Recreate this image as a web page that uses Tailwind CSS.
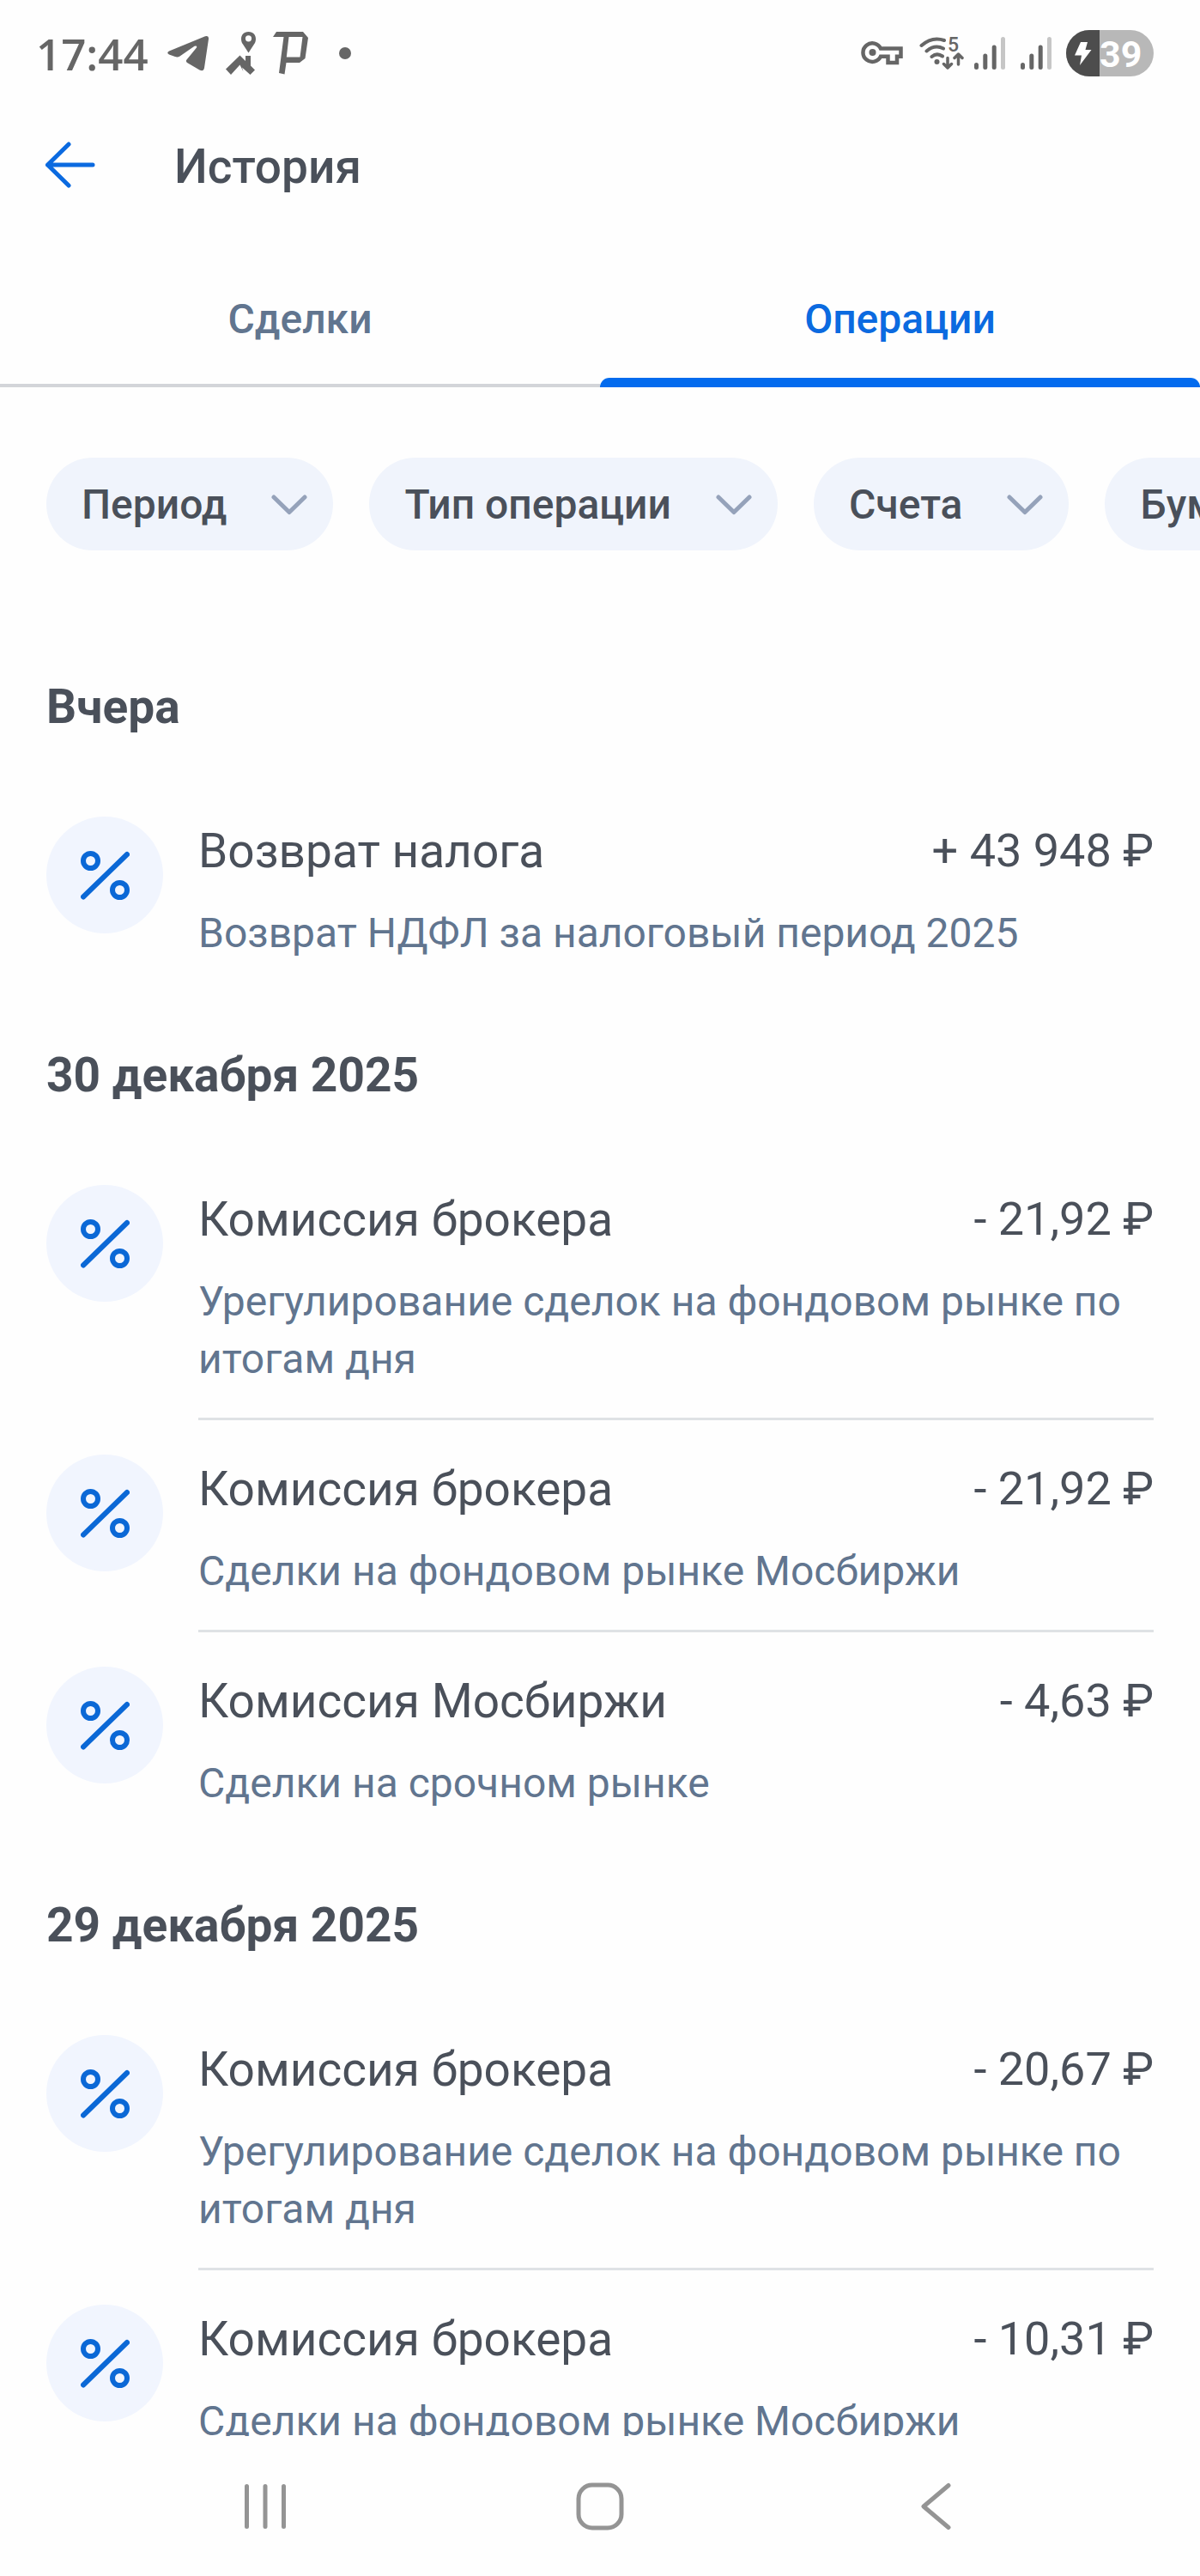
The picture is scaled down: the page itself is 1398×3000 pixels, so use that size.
<!DOCTYPE html>
<html lang="ru">
  <head>
    <meta charset="utf-8" />
    <meta name="viewport" content="width=device-width, initial-scale=1" />
    <title>История</title>
    <script src="https://cdn.jsdelivr.net/npm/@tailwindcss/browser@4"></script>
  </head>
  <body class="bg-[#fefefe]">
    <!-- Shared icons -->
    <svg class="hidden" xmlns="http://www.w3.org/2000/svg">
      <symbol id="icon-percent" viewBox="0 0 57 57">
        <g fill="none" stroke="currentColor" stroke-width="6" stroke-linecap="round">
          <circle cx="11.5" cy="11.5" r="8.5"></circle>
          <circle cx="45.5" cy="45.5" r="8.5"></circle>
          <path d="M3 53.5L54 4"></path>
        </g>
      </symbol>
      <symbol id="icon-chevron" viewBox="0 0 42 24">
        <path d="M3 3L21 20.5L39 3" fill="none" stroke="currentColor" stroke-width="5" stroke-linecap="round" stroke-linejoin="round"></path>
      </symbol>
      <symbol id="icon-signal" viewBox="0 0 36 40">
        <g fill="none" stroke-width="5" stroke-linecap="round">
          <path d="M2.5 33.5V36.5M12.8 23V36.5M23.2 13V36.5" stroke="#666666"></path>
          <path d="M33.5 3.5V36.5" stroke="#c6c6c6"></path>
        </g>
      </symbol>
    </svg>

    <div class="flex h-screen min-w-0 flex-col overflow-hidden text-[#4a505a]" style='font-family: Roboto, "Noto Sans", sans-serif;'>
      <!-- Status bar -->
      <div class="flex h-[124px] shrink-0 items-center justify-between pr-[54px] pl-[42px] text-[#666666]">
        <div class="flex items-center">
          <span class="text-[51px] leading-[60px] font-semibold" style='font-family: "Open Sans", sans-serif;'>17:44</span>
          <svg class="ml-[22px] h-[42px] w-12" viewBox="0 0 48 42" fill="currentColor">
            <path d="M2 18.500L44 1.200Q48.500 0 48 4.500L43 38Q42 43 37.500 40.500L23 32Q21 30.500 22.500 28.500L34 14.500Q35 11.500 31.500 12.800L14.500 24.500Q12 26 9 25L2 22.500Q-1.500 20.500 2 18.500Z"></path>
          </svg>
          <svg class="ml-5 h-[50px] w-[35px]" viewBox="0 0 35 50" fill="currentColor">
            <path fill-rule="evenodd" d="M26.5 0C18 0 16 9 20 14.500L26.500 24.500L33 14.500C37 9 35 0 26.500 0ZM26.500 4.200A3.600 3.600 0 1 1 26.500 11.400A3.600 3.600 0 1 1 26.500 4.200Z"></path>
            <path d="M0 43.500L16.500 27.500L23 34V28H29V39.500L34 44.500L28.500 50L19 41.500L20.500 46.500L16.500 38.500L6 50Z"></path>
          </svg>
          <svg class="ml-5 h-[50px] w-[42px]" viewBox="0 0 42 50" fill="currentColor">
            <path fill-rule="evenodd" d="M4 0H35L41 7L37.500 31L31 36H15.500L13.500 49.500L7 48L12.500 6H0ZM18.500 6L15.800 29.500H31.500L34.500 6Z"></path>
          </svg>
          <span class="ml-[35px] size-3.5 rounded-full bg-[#666666]"></span>
        </div>
        <div class="flex items-center">
          <svg class="h-[30px] w-[50px]" viewBox="0 0 50 30" fill="none" stroke="currentColor" stroke-width="4.5">
            <path d="M23 9.500H46.500V18.800H42V26H31.500V18.800H23A10.800 10.800 0 1 1 23 9.500Z"></path>
            <circle cx="13.500" cy="14" r="4" fill="currentColor" stroke="none"></circle>
          </svg>
          <svg class="ml-[18px] h-[40px] w-[52px]" viewBox="0 0 52 40" fill="none" stroke="currentColor" stroke-width="4" stroke-linecap="round">
            <path d="M2.500 11Q15 0 29 5M8.500 17.500Q18 9.500 28 14.500M14.500 24Q20.500 19 27 23.500"></path>
            <circle cx="20.500" cy="30" r="3" fill="currentColor" stroke="none"></circle>
            <path d="M33 25.500V36M28.500 32.500L33 37L37.500 32.500M45.500 33V21.500M41 25.500L45.500 21L50 25.500" stroke-width="3.500" stroke-linejoin="round"></path>
            <text x="33" y="18" font-size="23" font-weight="500" fill="currentColor" stroke="none">5</text>
          </svg>
          <svg class="ml-3 h-10 w-9"><use href="#icon-signal"></use></svg>
          <svg class="ml-[18px] h-10 w-9"><use href="#icon-signal"></use></svg>
          <div class="ml-[17px] flex h-[54px] w-[102px] overflow-hidden rounded-full bg-[#b8b8b8]">
            <div class="flex w-[39px] items-center justify-center bg-[#4d4d4d]">
              <svg class="h-7 w-5" viewBox="0 0 20 28" fill="#ffffff">
                <path d="M7 1L15 1L12.500 10H19.500L6 28L8 16.500H0Z"></path>
              </svg>
            </div>
            <span class="text-[43px] leading-[56px] font-bold text-white">39</span>
          </div>
        </div>
      </div>

      <!-- Title -->
      <header class="flex h-[136px] shrink-0 items-center gap-[92px] pl-[52px]">
        <button type="button" aria-label="Назад" class="text-[#0b6ae0]">
          <svg class="h-[54px] w-[59px]" viewBox="0 0 59 54" fill="none" stroke="currentColor" stroke-width="5" stroke-linecap="round" stroke-linejoin="round">
            <path d="M56 27H3.500M28 3L3.500 27L28 51"></path>
          </svg>
        </button>
        <h1 class="pt-1 text-[55px] leading-[72px] font-medium">История</h1>
      </header>

      <!-- Tabs -->
      <div role="tablist" class="grid shrink-0 grid-cols-2 text-[48px] leading-[64px] font-medium">
        <button type="button" role="tab" aria-selected="false" class="border-b-4 border-[#d3d5d9] pt-20 pb-[43px] text-[#61758f]">Сделки</button>
        <button type="button" role="tab" aria-selected="true" class="relative pt-20 pb-[47px] text-[#0b6ae0]">
          Операции
          <span class="absolute inset-x-0 bottom-0 h-[11px] rounded-t-[11px] bg-[#036bee]"></span>
        </button>
      </div>

      <!-- Filters -->
      <div class="mt-[82px] flex shrink-0 gap-[42px] overflow-hidden pl-[54px] text-[48px] leading-[64px] font-medium whitespace-nowrap">
        <button type="button" class="flex h-[108px] shrink-0 items-center gap-[52px] rounded-full bg-[#f0f4fc] pt-0.5 pr-[30px] pl-[41px]">
          Период
          <svg class="h-6 w-[42px] text-[#95a2ba]"><use href="#icon-chevron"></use></svg>
        </button>
        <button type="button" class="flex h-[108px] shrink-0 items-center gap-[52px] rounded-full bg-[#f0f4fc] pt-0.5 pr-[30px] pl-[41px]">
          Тип операции
          <svg class="h-6 w-[42px] text-[#95a2ba]"><use href="#icon-chevron"></use></svg>
        </button>
        <button type="button" class="flex h-[108px] shrink-0 items-center gap-[52px] rounded-full bg-[#f0f4fc] pt-0.5 pr-[30px] pl-[41px]">
          Счета
          <svg class="h-6 w-[42px] text-[#95a2ba]"><use href="#icon-chevron"></use></svg>
        </button>
        <button type="button" class="flex h-[108px] shrink-0 items-center gap-[52px] rounded-full bg-[#f0f4fc] pt-0.5 pr-[30px] pl-[41px]">
          Бумаги
          <svg class="h-6 w-[42px] text-[#95a2ba]"><use href="#icon-chevron"></use></svg>
        </button>
      </div>

      <!-- Operations -->
      <main class="mt-[142px] flex min-h-0 flex-1 flex-col gap-[57px] overflow-hidden px-[54px]">
        <section class="shrink-0">
          <h2 class="mb-12 text-[55px] leading-[80px] font-bold">Вчера</h2>
          <ul>
            <li class="flex gap-[41px] pt-10">
              <span class="flex size-[136px] shrink-0 items-center justify-center rounded-full bg-[#f1f5fe] text-[#0b68d6]">
                <svg class="size-[57px]"><use href="#icon-percent"></use></svg>
              </span>
              <div class="min-w-0 flex-1 pb-[35px]">
                <div class="flex justify-between leading-[80px]">
                  <h3 class="text-[55px]">Возврат налога</h3>
                  <span class="text-[54px] whitespace-nowrap">+ 43 948 ₽</span>
                </div>
                <p class="mt-[22px] text-[48px] leading-[67px] text-[#61758f]">Возврат НДФЛ за налоговый период 2025</p>
              </div>
            </li>
          </ul>
        </section>

        <section class="shrink-0">
          <h2 class="mb-12 text-[55px] leading-[80px] font-bold">30 декабря 2025</h2>
          <ul>
            <li class="flex gap-[41px] pt-10">
              <span class="flex size-[136px] shrink-0 items-center justify-center rounded-full bg-[#f1f5fe] text-[#0b68d6]">
                <svg class="size-[57px]"><use href="#icon-percent"></use></svg>
              </span>
              <div class="min-w-0 flex-1 border-b-3 border-[#dfe2e5] pb-[35px]">
                <div class="flex justify-between leading-[80px]">
                  <h3 class="text-[55px]">Комиссия брокера</h3>
                  <span class="text-[54px] whitespace-nowrap">- 21,92 ₽</span>
                </div>
                <p class="mt-[22px] text-[48px] leading-[67px] text-[#61758f]">Урегулирование сделок на фондовом рынке по итогам дня</p>
              </div>
            </li>
            <li class="flex gap-[41px] pt-10">
              <span class="flex size-[136px] shrink-0 items-center justify-center rounded-full bg-[#f1f5fe] text-[#0b68d6]">
                <svg class="size-[57px]"><use href="#icon-percent"></use></svg>
              </span>
              <div class="min-w-0 flex-1 border-b-3 border-[#dfe2e5] pb-[35px]">
                <div class="flex justify-between leading-[80px]">
                  <h3 class="text-[55px]">Комиссия брокера</h3>
                  <span class="text-[54px] whitespace-nowrap">- 21,92 ₽</span>
                </div>
                <p class="mt-[22px] text-[48px] leading-[67px] text-[#61758f]">Сделки на фондовом рынке Мосбиржи</p>
              </div>
            </li>
            <li class="flex gap-[41px] pt-10">
              <span class="flex size-[136px] shrink-0 items-center justify-center rounded-full bg-[#f1f5fe] text-[#0b68d6]">
                <svg class="size-[57px]"><use href="#icon-percent"></use></svg>
              </span>
              <div class="min-w-0 flex-1 pb-[35px]">
                <div class="flex justify-between leading-[80px]">
                  <h3 class="text-[55px]">Комиссия Мосбиржи</h3>
                  <span class="text-[54px] whitespace-nowrap">- 4,63 ₽</span>
                </div>
                <p class="mt-[22px] text-[48px] leading-[67px] text-[#61758f]">Сделки на срочном рынке</p>
              </div>
            </li>
          </ul>
        </section>

        <section class="shrink-0">
          <h2 class="mb-12 text-[55px] leading-[80px] font-bold">29 декабря 2025</h2>
          <ul>
            <li class="flex gap-[41px] pt-10">
              <span class="flex size-[136px] shrink-0 items-center justify-center rounded-full bg-[#f1f5fe] text-[#0b68d6]">
                <svg class="size-[57px]"><use href="#icon-percent"></use></svg>
              </span>
              <div class="min-w-0 flex-1 border-b-3 border-[#dfe2e5] pb-[35px]">
                <div class="flex justify-between leading-[80px]">
                  <h3 class="text-[55px]">Комиссия брокера</h3>
                  <span class="text-[54px] whitespace-nowrap">- 20,67 ₽</span>
                </div>
                <p class="mt-[22px] text-[48px] leading-[67px] text-[#61758f]">Урегулирование сделок на фондовом рынке по итогам дня</p>
              </div>
            </li>
            <li class="flex gap-[41px] pt-10">
              <span class="flex size-[136px] shrink-0 items-center justify-center rounded-full bg-[#f1f5fe] text-[#0b68d6]">
                <svg class="size-[57px]"><use href="#icon-percent"></use></svg>
              </span>
              <div class="min-w-0 flex-1 pb-[35px]">
                <div class="flex justify-between leading-[80px]">
                  <h3 class="text-[55px]">Комиссия брокера</h3>
                  <span class="text-[54px] whitespace-nowrap">- 10,31 ₽</span>
                </div>
                <p class="mt-[22px] text-[48px] leading-[67px] text-[#61758f]">Сделки на фондовом рынке Мосбиржи</p>
              </div>
            </li>
          </ul>
        </section>
      </main>

      <!-- System navigation -->
      <nav class="grid h-[163px] shrink-0 grid-cols-3 px-[114px] text-[#949494]">
        <button type="button" aria-label="Недавние" class="flex items-center justify-center">
          <svg class="size-14" viewBox="0 0 56 56" fill="none" stroke="currentColor" stroke-width="5" stroke-linecap="round">
            <path d="M6.5 4.5V51.5M28 4.5V51.5M49.5 4.5V51.5"></path>
          </svg>
        </button>
        <button type="button" aria-label="Домой" class="flex items-center justify-center">
          <svg class="size-14" viewBox="0 0 56 56" fill="none" stroke="currentColor" stroke-width="5">
            <rect x="3" y="3" width="50" height="50" rx="16"></rect>
          </svg>
        </button>
        <button type="button" aria-label="Назад" class="flex items-center justify-center">
          <svg class="size-14" viewBox="0 0 56 56" fill="none" stroke="currentColor" stroke-width="5" stroke-linecap="round" stroke-linejoin="round">
            <path d="M44 3.5L15 28L44 52.5"></path>
          </svg>
        </button>
      </nav>
    </div>
  </body>
</html>
